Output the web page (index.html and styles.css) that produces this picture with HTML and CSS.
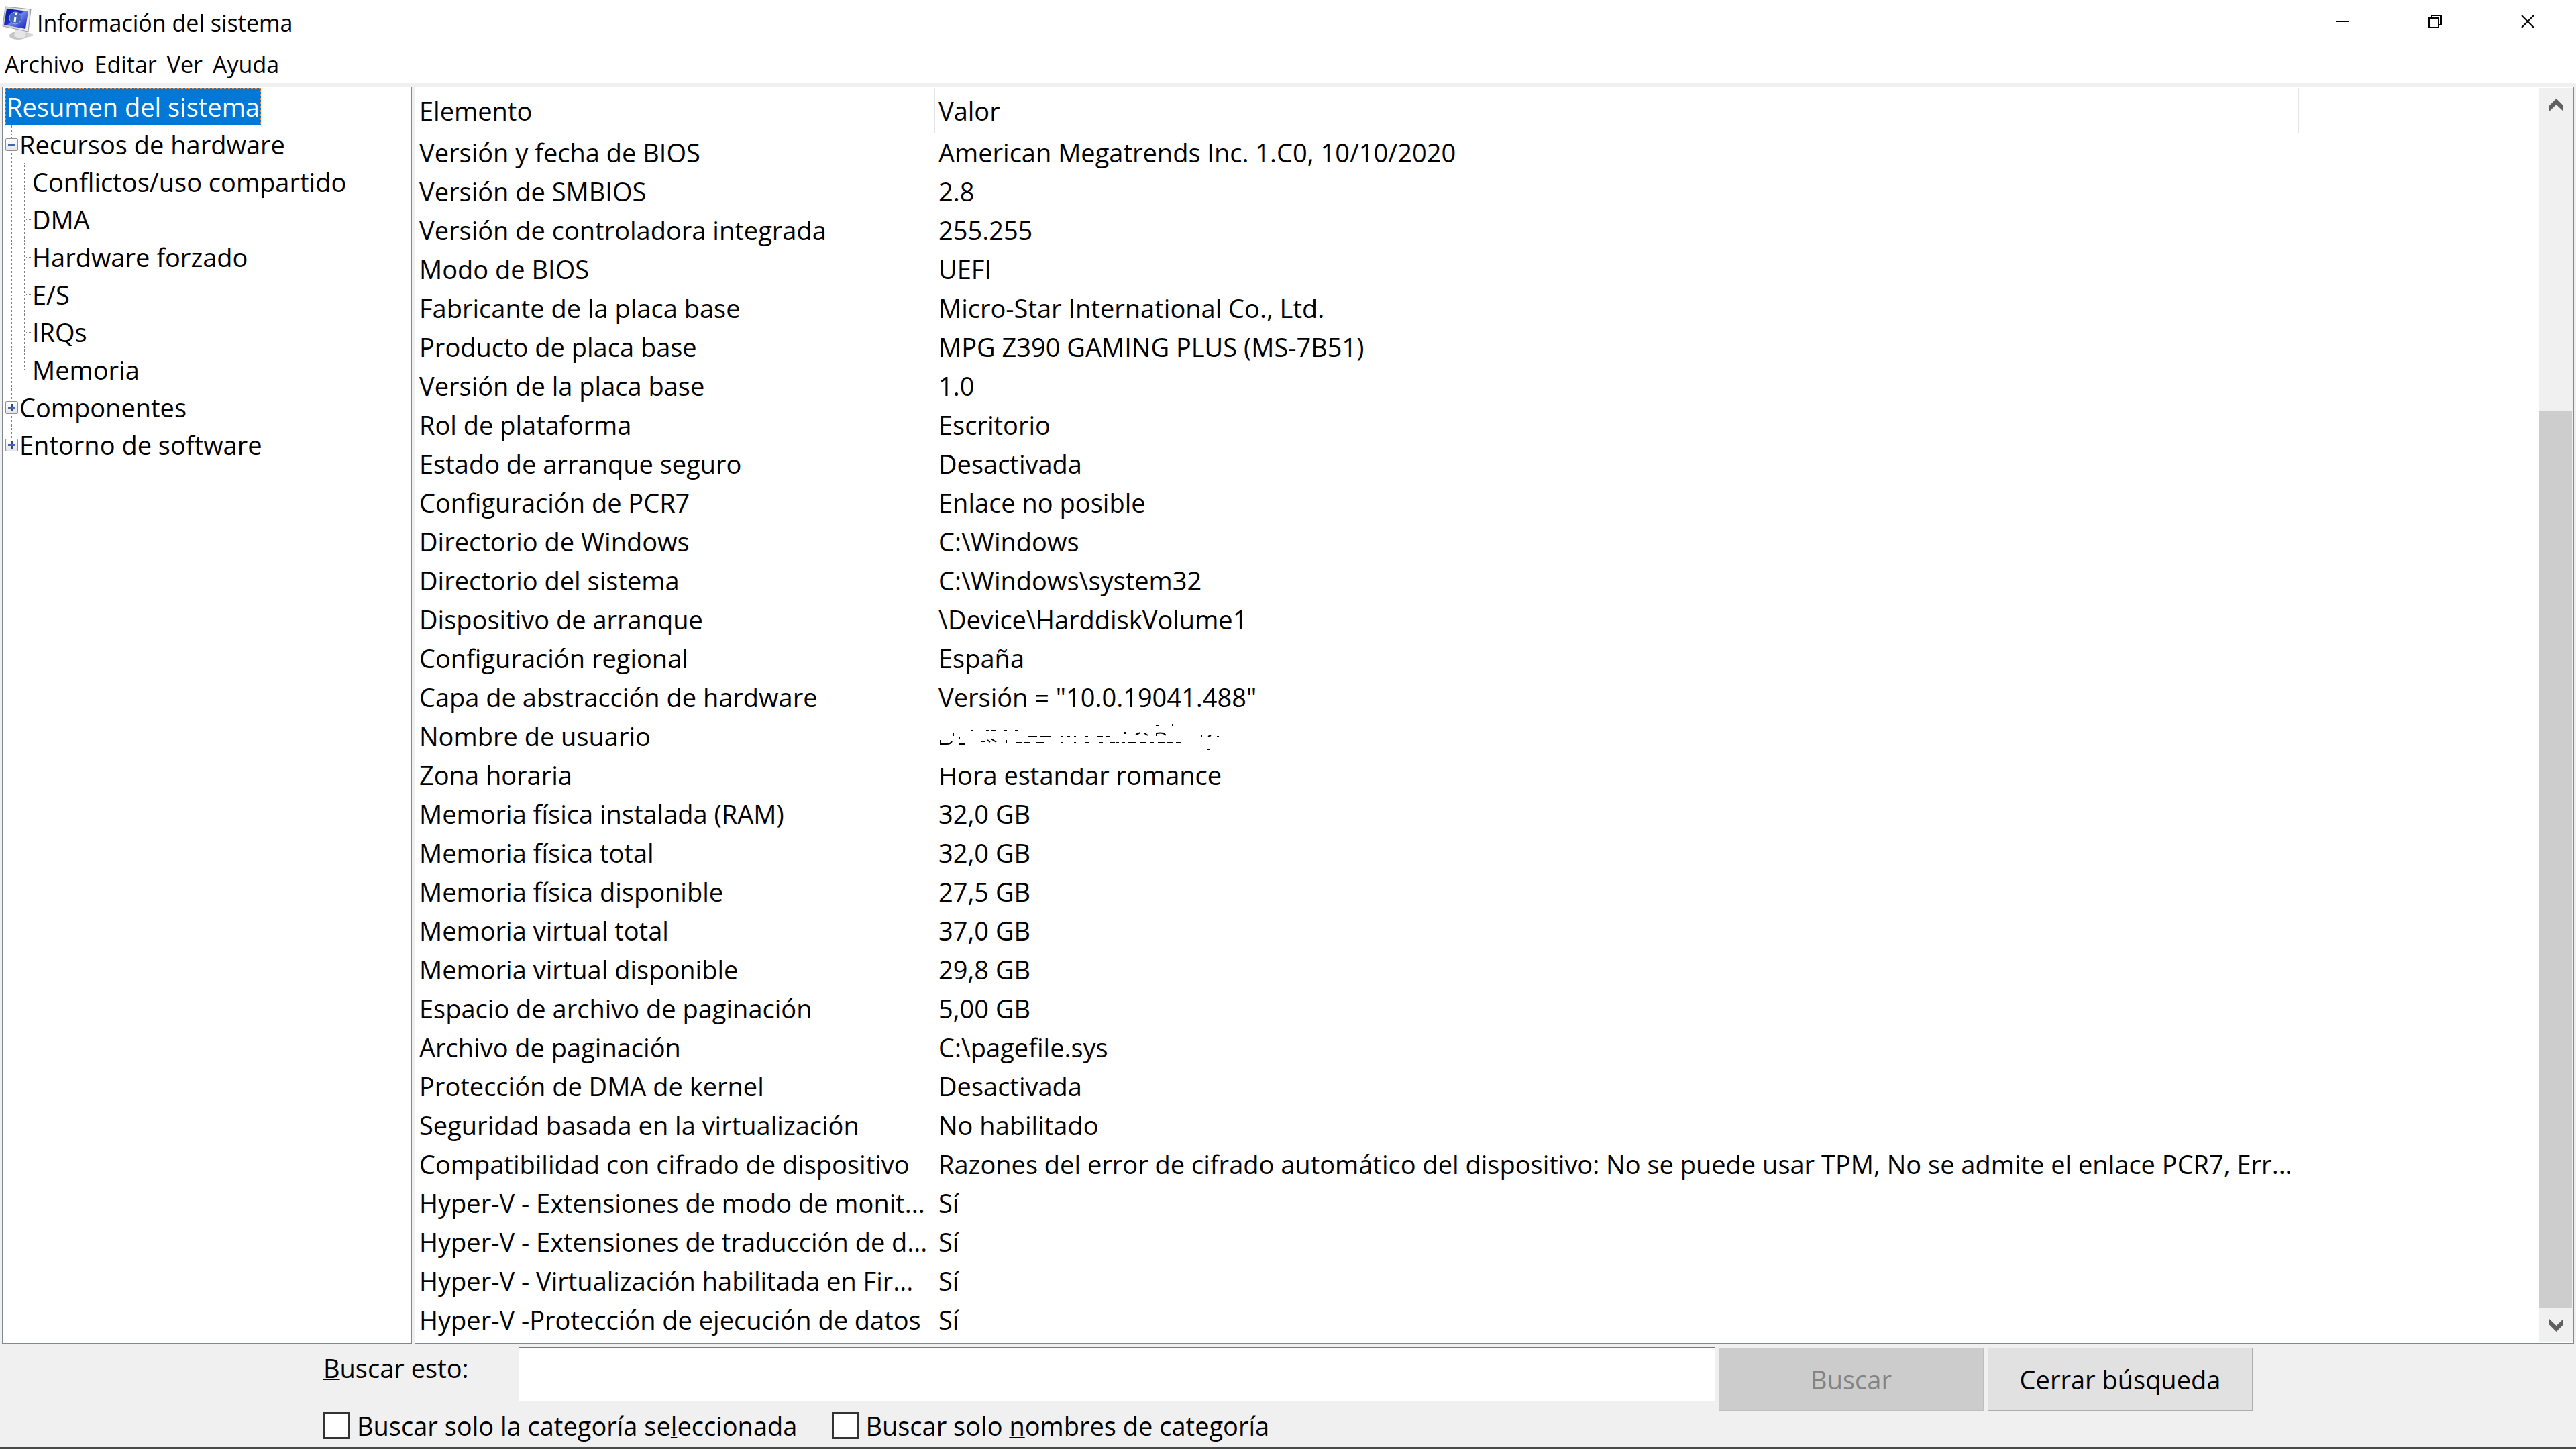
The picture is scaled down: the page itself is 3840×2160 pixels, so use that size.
FILE: index.html
```
<!DOCTYPE html>
<html lang="es">

<head>
    <meta charset="UTF-8">
    <meta name="viewport" content="width=device-width, initial-scale=1.0">
    <title>Información del sistema</title>
    <link rel="stylesheet" href="styles.css">
</head>

<body>
    <div class="window">
        <header class="titlebar">
            <svg class="app-icon" viewBox="0 0 46 50">
                <defs>
                    <linearGradient id="screen" x1="0" y1="0" x2="1" y2="1">
                        <stop offset="0" stop-color="#0a1a9c"></stop>
                        <stop offset="0.45" stop-color="#1a2fc4"></stop>
                        <stop offset="0.5" stop-color="#6f86ee"></stop>
                        <stop offset="1" stop-color="#0d18b0"></stop>
                    </linearGradient>
                    <linearGradient id="frame" x1="0" y1="0" x2="1" y2="0">
                        <stop offset="0" stop-color="#c9c9c9"></stop>
                        <stop offset="0.9" stop-color="#f2f2f2"></stop>
                        <stop offset="1" stop-color="#a9a9a9"></stop>
                    </linearGradient>
                </defs>
                <ellipse cx="32" cy="43" rx="14" ry="4" fill="#d4d4d4"></ellipse>
                <ellipse cx="24" cy="44" rx="13" ry="6" fill="#c6c6c6"></ellipse>
                <path d="M20 33l14 4 2 8q-8 5-18 0z" fill="#e6e6e6"></path>
                <path d="M5 1l38 4-4 33-38-8z" fill="url(#frame)" stroke="#9c9c9c"></path>
                <path d="M7 4l32 4-4 26-32-6z" fill="url(#screen)"></path>
                <circle cx="20" cy="18" r="9" fill="#4766bd" stroke="#9db4ea"></circle>
                <path d="M21 11v3M20 16l-1 8" stroke="#fff" stroke-width="3" fill="none"></path>
            </svg>
            <h1 class="title">Información del sistema</h1>
            <div class="controls">
                <button type="button" aria-label="Minimizar">
                    <svg viewBox="0 0 20 20"><path d="M0 10h20"></path></svg>
                </button>
                <button type="button" aria-label="Restaurar">
                    <svg viewBox="0 0 20 20"><path d="M1 5h14v14H1zM5 5V1h14v14h-4"></path></svg>
                </button>
                <button type="button" aria-label="Cerrar">
                    <svg viewBox="0 0 20 20"><path d="M1 1l18 18M19 1L1 19"></path></svg>
                </button>
            </div>
        </header>

        <nav class="menubar">
            <button type="button">Archivo</button>
            <button type="button">Editar</button>
            <button type="button">Ver</button>
            <button type="button">Ayuda</button>
        </nav>

        <main class="panes">
            <section class="pane tree-pane">
                <ul class="tree">
                    <li><span class="selected">Resumen del sistema</span></li>
                    <li>
                        <button type="button" class="toggle" aria-label="Contraer"></button>Recursos de hardware
                        <ul class="branch">
                            <li>Conflictos/uso compartido</li>
                            <li>DMA</li>
                            <li>Hardware forzado</li>
                            <li>E/S</li>
                            <li>IRQs</li>
                            <li>Memoria</li>
                        </ul>
                    </li>
                    <li><button type="button" class="toggle closed" aria-label="Expandir"></button>Componentes</li>
                    <li><button type="button" class="toggle closed" aria-label="Expandir"></button>Entorno de software</li>
                </ul>
            </section>

            <section class="pane list-pane">
                <div class="list">
                    <table>
                        <colgroup>
                            <col class="col-item">
                            <col class="col-value">
                            <col>
                        </colgroup>
                        <thead>
                            <tr><th>Elemento</th><th>Valor</th><td></td></tr>
                        </thead>
                        <tbody>
                            <tr><td>Versión y fecha de BIOS</td><td>American Megatrends Inc. 1.C0, 10/10/2020</td></tr>
                            <tr><td>Versión de SMBIOS</td><td>2.8</td></tr>
                            <tr><td>Versión de controladora integrada</td><td>255.255</td></tr>
                            <tr><td>Modo de BIOS</td><td>UEFI</td></tr>
                            <tr><td>Fabricante de la placa base</td><td>Micro-Star International Co., Ltd.</td></tr>
                            <tr><td>Producto de placa base</td><td>MPG Z390 GAMING PLUS (MS-7B51)</td></tr>
                            <tr><td>Versión de la placa base</td><td>1.0</td></tr>
                            <tr><td>Rol de plataforma</td><td>Escritorio</td></tr>
                            <tr><td>Estado de arranque seguro</td><td>Desactivada</td></tr>
                            <tr><td>Configuración de PCR7</td><td>Enlace no posible</td></tr>
                            <tr><td>Directorio de Windows</td><td>C:\Windows</td></tr>
                            <tr><td>Directorio del sistema</td><td>C:\Windows\system32</td></tr>
                            <tr><td>Dispositivo de arranque</td><td>\Device\HarddiskVolume1</td></tr>
                            <tr><td>Configuración regional</td><td>España</td></tr>
                            <tr><td>Capa de abstracción de hardware</td><td>Versión = "10.0.19041.488"</td></tr>
                            <tr>
                                <td>Nombre de usuario</td>
                                <td class="erased">
                                    <!-- nombre borrado, solo quedan restos -->
                                    <svg viewBox="0 0 440 62">
                                        <rect width="440" height="62" fill="#fff" stroke="none"></rect>
                                        <path d="M4 20v7M3 26h10q6 0 8-4M23 10v4M32 16v3M31 26h10M49 6h4M72 6h4M80 6h6M99 6h4M115 6h4M64 22h6M74 20l4 3M79 18l8 5M102 20v5M116 24h10M128 24h10M134 15h14M147 24h12M153 15h4M155 15h14M183 15h3M183 24h3M192 15h5M203 15h3M203 24h3M219 15h5M220 24h5M237 15h9M240 24h6M250 15h6M256 24h8M265 24h5M274 24h5M279 8v3M283 24h12M295 12l7-3M302 24h9M308 10l5 3M325-2h4M326 14v-4q10-2 14 3M350-4v3M316 24h6M328 24h10M342 24h8M355 24h8M393 12v3M403 15l4-2M416 15h3M402 34h3"></path>
                                    </svg>
                                </td>
                            </tr>
                            <tr><td>Zona horaria</td><td>Hora estandar romance</td></tr>
                            <tr><td>Memoria física instalada (RAM)</td><td>32,0 GB</td></tr>
                            <tr><td>Memoria física total</td><td>32,0 GB</td></tr>
                            <tr><td>Memoria física disponible</td><td>27,5 GB</td></tr>
                            <tr><td>Memoria virtual total</td><td>37,0 GB</td></tr>
                            <tr><td>Memoria virtual disponible</td><td>29,8 GB</td></tr>
                            <tr><td>Espacio de archivo de paginación</td><td>5,00 GB</td></tr>
                            <tr><td>Archivo de paginación</td><td>C:\pagefile.sys</td></tr>
                            <tr><td>Protección de DMA de kernel</td><td>Desactivada</td></tr>
                            <tr><td>Seguridad basada en la virtualización</td><td>No habilitado</td></tr>
                            <tr><td>Compatibilidad con cifrado de dispositivo</td><td>Razones del error de cifrado automático del dispositivo: No se puede usar TPM, No se admite el enlace PCR7, Err...</td></tr>
                            <tr><td>Hyper-V - Extensiones de modo de monit...</td><td>Sí</td></tr>
                            <tr><td>Hyper-V - Extensiones de traducción de d...</td><td>Sí</td></tr>
                            <tr><td>Hyper-V - Virtualización habilitada en Fir...</td><td>Sí</td></tr>
                            <tr><td>Hyper-V -Protección de ejecución de datos</td><td>Sí</td></tr>
                        </tbody>
                    </table>
                </div>
                <div class="scrollbar">
                    <button type="button" aria-label="Subir">
                        <svg viewBox="0 0 21 19"><path d="M0 10.500L10.500 0L21 10.500V19L10.500 9L0 19z"></path></svg>
                    </button>
                    <div class="track"></div>
                    <div class="thumb"></div>
                    <button type="button" aria-label="Bajar">
                        <svg viewBox="0 0 21 19"><path d="M0 8.500L10.500 19L21 8.500V0L10.500 10L0 0z"></path></svg>
                    </button>
                </div>
            </section>
        </main>

        <form class="search">
            <div class="search-row">
                <label class="search-label" for="query"><u>B</u>uscar esto:</label>
                <input class="search-input" id="query" type="text">
                <button type="submit" class="btn" disabled>Busca<u>r</u></button>
                <button type="button" class="btn"><u>C</u>errar búsqueda</button>
            </div>
            <div class="options">
                <label><input type="checkbox"><span>Buscar solo la categoría se<u>l</u>eccionada</span></label>
                <label><input type="checkbox"><span>Buscar solo <u>n</u>ombres de categoría</span></label>
            </div>
        </form>
    </div>
</body>

</html>
```
FILE: styles.css
```
* {
    box-sizing: border-box;
}

html,
body,
ul {
    padding: 0;
    margin: 0;
}

ul {
    list-style: none;
}

body,
button,
input {
    font-family: "Open Sans", "Noto Sans", sans-serif;
    font-size: 38px;
    color: #000;
}

button {
    padding: 0;
    border: none;
    background: none;
}

u {
    text-decoration-thickness: 1px;
    text-underline-offset: 2px;
    text-decoration-skip-ink: none;
}

.window {
    display: flex;
    flex-direction: column;
    min-height: 100vh;
    background-color: #f0f0f0;
    border-bottom: 3px solid #484a48;
}

/* title bar */
.titlebar {
    display: flex;
    align-items: center;
    height: 68px;
    padding: 0 3px;
    background-color: #fff;
}

.app-icon {
    width: 46px;
    height: 50px;
}

.title {
    flex: 1;
    margin: 0 0 0 6px;
    font-size: 34px;
    font-weight: normal;
}

.controls {
    display: flex;
    align-self: flex-start;
}

.controls button {
    display: flex;
    align-items: center;
    justify-content: center;
    width: 138px;
    height: 64px;
}

.controls svg {
    width: 20px;
    height: 20px;
    fill: none;
    stroke: #000;
    stroke-width: 2;
}

/* menu */
.menubar {
    display: flex;
    gap: 15px;
    height: 55px;
    padding-left: 7px;
    background-color: #fff;
}

.menubar button {
    font-size: 34px;
}

/* panes */
.panes {
    display: flex;
    flex: 1;
    gap: 4px;
    padding: 6px 3px 0;
}

.pane {
    border: 1px solid #828790;
    background-color: #fff;
    padding: 1px;
}

.tree-pane {
    flex: none;
    width: 611px;
    padding-left: 4px;
}

.list-pane {
    display: flex;
    flex: 1;
    min-width: 0;
}

/* tree */
.tree {
    line-height: 56px;
    white-space: nowrap;
}

.tree li {
    position: relative;
    padding-left: 21px;
}

.tree > li:first-child {
    padding-left: 0;
}

.tree .selected {
    display: inline-block;
    padding: 0 2px;
    background-color: #0078d7;
    color: #fff;
    outline: 1px dotted #ff8728;
    outline-offset: -1px;
}

.tree > li::before {
    content: "";
    position: absolute;
    left: 9px;
    top: 0;
    bottom: 0;
    border-left: 1px dotted #808080;
}

.tree > li:first-child::before {
    display: none;
}

.tree > li:last-child::before {
    bottom: 50%;
}

.toggle {
    position: absolute;
    left: 0;
    top: 19px;
    width: 19px;
    height: 19px;
    border: 1px solid #919191;
    border-radius: 2px;
    background: linear-gradient(#4b63a7, #4b63a7) center / 11px 3px no-repeat, linear-gradient(#fff, #e4e4e4);
}

.toggle.closed {
    background: linear-gradient(#4b63a7, #4b63a7) center / 11px 3px no-repeat, linear-gradient(#2f4784, #2f4784) center / 3px 11px no-repeat, linear-gradient(#fff, #e4e4e4);
}

.branch li {
    padding-left: 19px;
}

.branch li::before {
    content: "";
    position: absolute;
    left: 7px;
    top: 0;
    bottom: 0;
    border-left: 1px dotted #808080;
}

.branch li:last-child::before {
    bottom: 50%;
}

.branch li::after {
    content: "";
    position: absolute;
    left: 8px;
    top: 28px;
    width: 9px;
    border-top: 1px dotted #808080;
}

/* list */
.list {
    flex: 1;
    min-width: 0;
    overflow: hidden;
}

table {
    width: 100%;
    table-layout: fixed;
    border-collapse: separate;
    border-spacing: 0;
    white-space: nowrap;
}

.col-item {
    width: 774px;
}

.col-value {
    width: 2033px;
}

th,
td {
    height: 58px;
    padding: 0 0 0 5px;
    line-height: 58px;
    text-align: left;
    font-weight: normal;
}

thead th {
    height: 67px;
    border-right: 1px solid #e5e5e5;
}

.erased {
    position: relative;
}

.erased svg {
    position: absolute;
    left: 4px;
    top: 15px;
    width: 440px;
    height: 62px;
    overflow: visible;
    fill: none;
    stroke: #000;
    stroke-width: 2;
}

/* scroll bar */
.scrollbar {
    display: flex;
    flex-direction: column;
    width: 50px;
    background-color: #f0f0f0;
}

.scrollbar button {
    display: flex;
    align-items: center;
    justify-content: center;
    height: 51px;
}

.scrollbar svg {
    width: 21px;
    height: 19px;
    fill: #606060;
}

.track {
    flex: 431;
}

.thumb {
    flex: 1337;
    margin-right: 1px;
    background-color: #cdcdcd;
}

/* search */
.search {
    width: 100%;
    max-width: 2876px;
    height: 154px;
    margin: 0 auto;
    padding-top: 5px;
}

.search-row {
    display: flex;
    align-items: flex-start;
}

.search-label {
    width: 291px;
    padding-top: 5px;
}

.search-input {
    flex: 1;
    min-width: 0;
    height: 81px;
    margin-right: 5px;
    padding: 0 6px;
    border: 1px solid #7a7a7a;
    background-color: #fff;
}

.btn {
    width: 395px;
    height: 94px;
    margin-top: 1px;
    border: 1px solid #adadad;
    background-color: #e1e1e1;
}

.btn + .btn {
    margin-left: 6px;
}

.btn:disabled {
    border-color: #bfbfbf;
    background-color: #ccc;
    color: #838383;
}

.options {
    display: flex;
    gap: 52px;
    line-height: 44px;
}

.options label {
    display: flex;
    align-items: center;
}

.options input {
    appearance: none;
    width: 40px;
    height: 40px;
    margin: 0 10px 0 0;
    border: 3px solid #333;
    background-color: #fff;
}
```
